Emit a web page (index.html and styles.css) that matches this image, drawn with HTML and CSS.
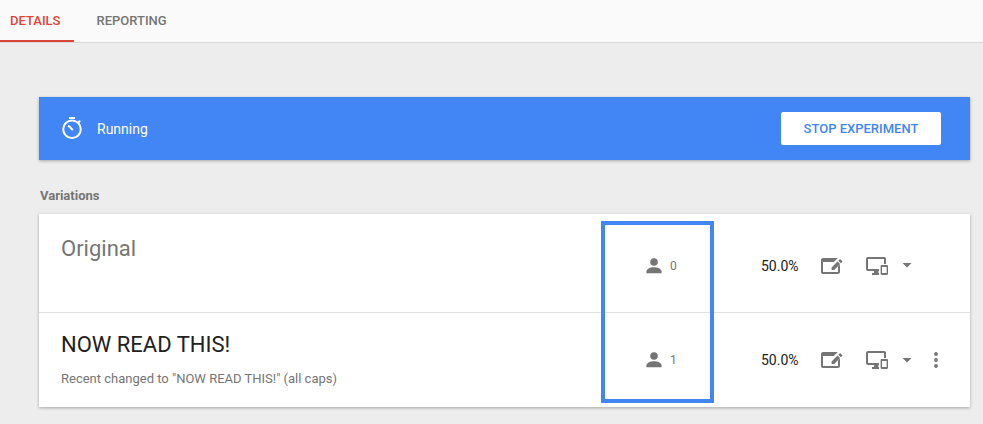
FILE: index.html
```html
<!DOCTYPE html>
<html lang="en">
<head>
    <meta charset="UTF-8">
    <meta name="viewport" content="width=device-width, initial-scale=1.0">
    <title>Experiment details</title>
    <link rel="stylesheet" href="styles.css">
</head>
<body>
    <!-- shared icons -->
    <svg class="icon-defs" aria-hidden="true">
        <symbol id="icon-person" viewBox="0 0 16 16">
            <circle cx="8" cy="4" r="3.8"/>
            <path d="M8 9.2c-3.4 0-7.6 1.4-7.6 4.3v1.8h15.2v-1.8c0-2.9-4.2-4.3-7.6-4.3z"/>
        </symbol>
        <symbol id="icon-edit" viewBox="0 0 22 18">
            <path d="M2 1h14.8l-4 4H2v10h15V9.6l2-2V15c0 1.1-.9 2-2 2H2c-1.1 0-2-.9-2-2V3c0-1.1.9-2 2-2z"/>
            <path d="M10.6 10.4V13h2.6l5.9-5.9-2.6-2.6zM17.3 3.7l2.6 2.6 1.3-1.3c.3-.3.3-.7 0-1l-1.6-1.6c-.3-.3-.7-.3-1 0z"/>
        </symbol>
        <symbol id="icon-devices" viewBox="0 0 22 18">
            <path d="M2 0h16.2c1 0 1.8.8 1.8 1.8V7h-2V2H2v10h11v2H2c-1.1 0-2-.9-2-2V2C0 .9.9 0 2 0z"/>
            <path d="M8 14h4.4v2H13v2H6v-2h2z"/>
            <path fill-rule="evenodd" d="M15.8 8h5c.7 0 1.2.5 1.2 1.2v7.6c0 .7-.5 1.2-1.2 1.2h-5c-.7 0-1.2-.5-1.2-1.2V9.2c0-.7.5-1.2 1.2-1.2zm.2 2v6h4.6v-6z"/>
        </symbol>
        <symbol id="icon-caret" viewBox="0 0 10 5">
            <path d="M.5 0h9L5 4.6z"/>
        </symbol>
        <symbol id="icon-more" viewBox="0 0 4 16">
            <circle cx="2" cy="2" r="1.9"/>
            <circle cx="2" cy="8" r="1.9"/>
            <circle cx="2" cy="14" r="1.9"/>
        </symbol>
    </svg>

    <nav class="tabs">
        <a href="#details" class="tab active">DETAILS</a>
        <a href="#reporting" class="tab">REPORTING</a>
    </nav>

    <main class="content">
        <section class="status-bar">
            <svg class="timer" width="22" height="23" viewBox="0 0 22 23" fill="none" stroke="#fff" stroke-width="2" aria-hidden="true">
                <path d="M8 1h6M17.4 5.4l1.8-1.8"/>
                <circle cx="11" cy="12.2" r="8.8"/>
                <path d="M11.8 12.9L7.2 8.6"/>
            </svg>
            <span class="status">Running</span>
            <button type="button" class="stop-btn">STOP EXPERIMENT</button>
        </section>

        <h2>Variations</h2>
        <section class="variations">
            <div class="variation original">
                <div class="info">
                    <h3>Original</h3>
                </div>
                <div class="visitors">
                    <svg width="16" height="16"><use href="#icon-person"/></svg>
                    <span>0</span>
                </div>
                <div class="actions">
                    <span class="weight">50.0%</span>
                    <button type="button" class="edit" aria-label="Edit variation"><svg width="22" height="18"><use href="#icon-edit"/></svg></button>
                    <button type="button" class="devices" aria-label="Preview on device"><svg width="22" height="18"><use href="#icon-devices"/></svg><svg width="10" height="5"><use href="#icon-caret"/></svg></button>
                </div>
            </div>
            <div class="variation">
                <div class="info">
                    <h3>NOW READ THIS!</h3>
                    <p>Recent changed to "NOW READ THIS!" (all caps)</p>
                </div>
                <div class="visitors">
                    <svg width="16" height="16"><use href="#icon-person"/></svg>
                    <span>1</span>
                </div>
                <div class="actions">
                    <span class="weight">50.0%</span>
                    <button type="button" class="edit" aria-label="Edit variation"><svg width="22" height="18"><use href="#icon-edit"/></svg></button>
                    <button type="button" class="devices" aria-label="Preview on device"><svg width="22" height="18"><use href="#icon-devices"/></svg><svg width="10" height="5"><use href="#icon-caret"/></svg></button>
                    <button type="button" class="more" aria-label="More options"><svg width="4" height="16"><use href="#icon-more"/></svg></button>
                </div>
            </div>
            <div class="highlight"></div>
        </section>
    </main>
</body>
</html>
```

FILE: styles.css
```css
:root {
    --blue: #4285f4;
    --red: #db4437;
    --grey: #757575;
    --text-color: #212121;
    --background-color: #ededed;
}

* {
    box-sizing: border-box;
}

body {
    font-family: Roboto, "Liberation Sans", sans-serif;
    background-color: var(--background-color);
    color: var(--text-color);
    margin: 0;
}

h2, h3, p {
    margin: 0;
}

button {
    border: none;
    background: none;
    padding: 0;
    font-family: inherit;
    color: inherit;
    cursor: pointer;
}

svg {
    display: block;
    fill: currentColor;
}

.icon-defs {
    display: none;
}

.tabs {
    display: flex;
    background-color: #fafafa;
    border-bottom: 1px solid #dadada;
}

.tab {
    padding: 12px 14px 10px 10px;
    border-bottom: 2px solid transparent;
    color: var(--grey);
    font-size: 13px;
    font-weight: 500;
    line-height: 18px;
    text-decoration: none;
}

.tab + .tab {
    padding-left: 22px;
}

.tab.active {
    color: var(--red);
    border-bottom-color: var(--red);
}

.content {
    padding: 54px 13px 17px 39px;
}

.status-bar {
    display: flex;
    align-items: center;
    padding: 15px 29px 15px 22px;
    background-color: var(--blue);
    color: white;
    box-shadow: 0 1px 3px rgba(0, 0, 0, 0.3);
}

.timer {
    fill: none;
}

.status {
    flex: 1;
    margin-left: 14px;
    font-size: 14px;
}

.stop-btn {
    width: 160px;
    height: 33px;
    border-radius: 2px;
    background-color: white;
    color: var(--blue);
    font-size: 13px;
    font-weight: 500;
}

h2 {
    padding: 27px 1px 9px;
    color: var(--grey);
    font-size: 13px;
    font-weight: 700;
    line-height: 18px;
}

.variations {
    position: relative;
    background-color: white;
    box-shadow: 0 1px 3px rgba(0, 0, 0, 0.3);
}

.variation {
    display: grid;
    grid-template-columns: 1fr 113px 256px;
    align-items: center;
    min-height: 94px;
    padding: 18px 0;
    color: var(--grey);
}

.variation.original {
    min-height: 99px;
    padding: 21px 0 16px;
    border-bottom: 1px solid #e0e0e0;
}

.info {
    align-self: start;
    padding-left: 22px;
}

h3 {
    color: var(--text-color);
    font-size: 22px;
    font-weight: 400;
    line-height: 28px;
}

.original h3 {
    color: var(--grey);
}

.info p {
    margin-top: 11px;
    font-size: 13px;
    line-height: 18px;
}

.visitors {
    display: flex;
    align-items: center;
    gap: 8px;
    padding-left: 45px;
    font-size: 12px;
}

.actions {
    display: flex;
    align-items: center;
    padding-left: 47px;
}

.weight {
    width: 39px;
    color: var(--text-color);
    font-size: 14px;
}

.edit {
    margin-left: 21px;
}

.devices {
    display: flex;
    align-items: center;
    gap: 14px;
    margin-left: 23px;
}

.more {
    margin-left: 22px;
}

/* frame around the visitor counts */
.highlight {
    position: absolute;
    top: 7px;
    right: 256px;
    bottom: 4px;
    width: 113px;
    border: 4px solid var(--blue);
    pointer-events: none;
}
```
